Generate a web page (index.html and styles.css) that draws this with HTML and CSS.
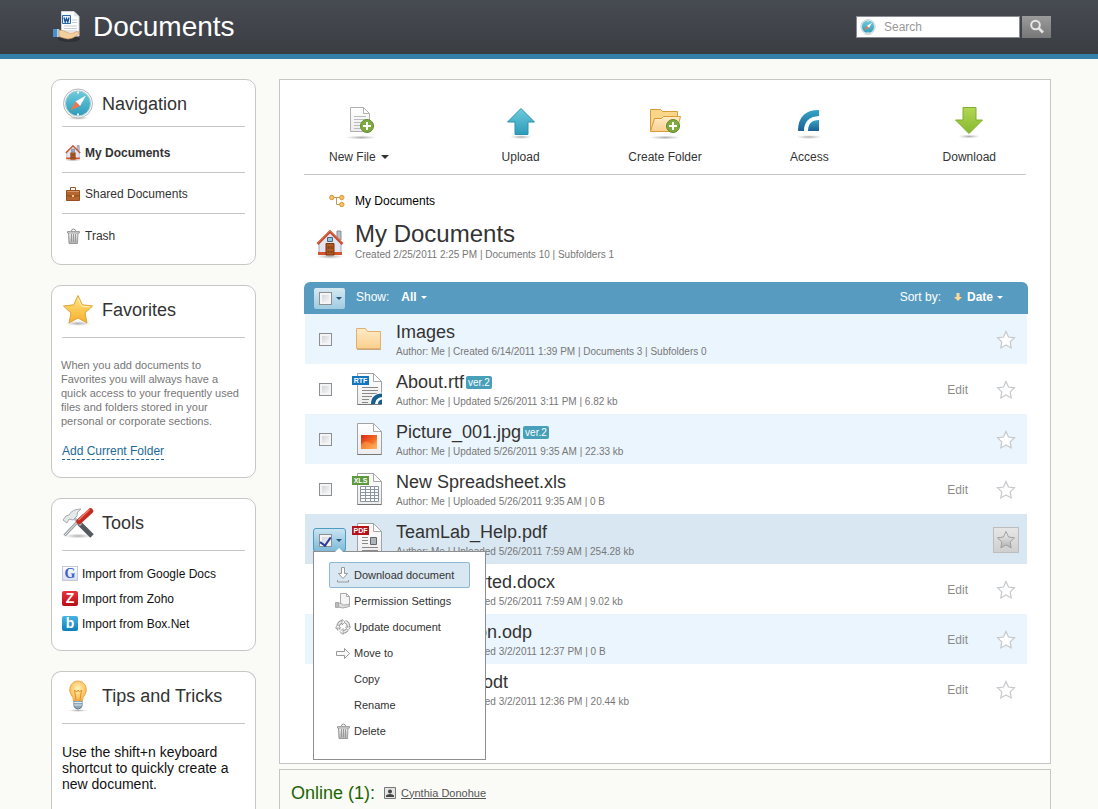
FILE: index.html
```html
<!DOCTYPE html>
<html lang="en">
<head>
<meta charset="utf-8">
<title>Documents</title>
<link rel="stylesheet" href="styles.css">
</head>
<body>
<svg class="defs" width="0" height="0" aria-hidden="true">
  <defs>
    <linearGradient id="gPage" x1="0" y1="0" x2="0" y2="1"><stop offset="0" stop-color="#fff"/><stop offset="1" stop-color="#ececee"/></linearGradient>
    <linearGradient id="gBlue" x1="0" y1="0" x2="0" y2="1"><stop offset="0" stop-color="#6fcbdc"/><stop offset="1" stop-color="#2c9cba"/></linearGradient>
    <linearGradient id="gDeep" x1="0" y1="0" x2="0" y2="1"><stop offset="0" stop-color="#35a5c6"/><stop offset="1" stop-color="#1b5f94"/></linearGradient>
    <linearGradient id="gGreen" x1="0" y1="0" x2="0" y2="1"><stop offset="0" stop-color="#b2d755"/><stop offset="1" stop-color="#86b82c"/></linearGradient>
    <linearGradient id="gFolder" x1="0" y1="0" x2="0" y2="1"><stop offset="0" stop-color="#ffebc8"/><stop offset="1" stop-color="#fbcf8d"/></linearGradient>
    <linearGradient id="gStar" x1="0" y1="0" x2="0" y2="1"><stop offset="0" stop-color="#ffe681"/><stop offset="1" stop-color="#f8ae2c"/></linearGradient>
    <linearGradient id="gPic" x1="0" y1="0" x2="1" y2="1"><stop offset="0" stop-color="#d9261a"/><stop offset=".55" stop-color="#f26a21"/><stop offset="1" stop-color="#ffb45c"/></linearGradient>
    <linearGradient id="gGrey" x1="0" y1="0" x2="0" y2="1"><stop offset="0" stop-color="#f4f4f4"/><stop offset="1" stop-color="#b0b0b0"/></linearGradient>
    <radialGradient id="gBulb" cx=".5" cy=".4" r=".6"><stop offset="0" stop-color="#fff3b8"/><stop offset="1" stop-color="#f9b546"/></radialGradient>
    <radialGradient id="gShade"><stop offset="0" stop-color="#777" stop-opacity=".6"/><stop offset="1" stop-color="#999" stop-opacity="0"/></radialGradient>
    <symbol id="compass" viewBox="0 0 32 32">
      <ellipse cx="16" cy="30" rx="11" ry="2" fill="url(#gShade)"/>
      <circle cx="16" cy="15.500" r="14.500" fill="#f6f6f6" stroke="#b4b8ba"/>
      <circle cx="16" cy="15.500" r="12.500" fill="url(#gBlue)" stroke="#a7ccd6"/>
      <path d="M16 3.500v2M16 25.500v2" stroke="#fff" stroke-width="2"/>
      <path d="M24 7.500 18 18l-4.500-4.500z" fill="#fff"/>
      <path d="m8.500 22.500 5-9L18 18z" fill="#f0774b"/>
    </symbol>
    <symbol id="house" viewBox="0 0 32 32">
      <ellipse cx="16" cy="29.500" rx="14" ry="2.500" fill="url(#gShade)"/>
      <path d="M23 4h4v9h-4z" fill="#b9bdc6" stroke="#8b8f98"/>
      <path d="M5 15 16 5l11 10v12H5z" fill="#e2e4f0" stroke="#a5a7b7"/>
      <path d="M4 25h24v3H4z" fill="#d6532d"/>
      <path d="M12 16.500h8V28h-8z" fill="#b05a23" stroke="#7b3510"/>
      <path d="M13.500 19h2v3h-2zm3 0h2v3h-2zM13.500 24h2v2h-2zm3 0h2v2h-2z" fill="#8a4218"/>
      <path d="M13.500 10.500h5v4h-5z" fill="#8ec4e8" stroke="#59616f"/>
      <path d="M3.500 17 16 4.500 28.500 17" fill="none" stroke="#c2492a" stroke-width="2.500"/>
      <path d="M3.500 16 16 3.800 28.500 16" fill="none" stroke="#ee8a63" stroke-width=".8"/>
    </symbol>
    <symbol id="sheet" viewBox="0 0 32 32">
      <path d="M5.500.500h16l8 8v23h-24z" fill="url(#gPage)" stroke="#a2a2a2"/>
      <path d="M5.500 31.500h24" stroke="#777"/>
      <path d="M21.500.500v8h8z" fill="#fff" stroke="#a8a8a8"/>
    </symbol>
    <symbol id="fav" viewBox="0 0 20 20">
      <path d="M10 1.500 12.500 7l6 .800-4.300 4.100 1 6L10 15l-5.200 2.900 1-6L1.500 7.800l6-.800z" fill="#fff" stroke="#c6c9cc" stroke-width="1.200"/>
    </symbol>
    <symbol id="plus" viewBox="0 0 14 14">
      <circle cx="7" cy="7" r="6.500" fill="#7eaa3f" stroke="#5d8a2a"/>
      <path d="M7 3v8M3 7h8" stroke="#fff" stroke-width="2"/>
    </symbol>
    <symbol id="bin" viewBox="0 0 16 16">
      <path d="M3.500 4.500h9.500l-.5 11h-8.500z" fill="url(#gGrey)" stroke="#999"/>
      <path d="M6.500 6v8M8.500 6v8M10.500 6v8" stroke="#999"/>
      <path d="M2.500 3.500h12v1.500h-12z" fill="#e4e4e4" stroke="#8d8d8d" stroke-width=".8"/>
      <path d="M6.500 3q0-2 2-2t2 2" fill="none" stroke="#8d8d8d"/>
    </symbol>
  </defs>
</svg>

<header class="topbar">
  <div class="brand">
    <svg class="brand-icon" viewBox="0 0 30 32" aria-hidden="true">
      <ellipse cx="17" cy="28" rx="11" ry="3" fill="#222" opacity=".5"/>
      <path d="M9.500.500H22l5 5V25H9.500z" fill="#fff" stroke="#d0d4da"/>
      <path d="M22 .500v5h5z" fill="#dfe4ea"/>
      <path d="M20 9h5M20 11.500h5M12 15h13M12 17.500h13M12 20h13" stroke="#c5cad2"/>
      <path d="M10.500 4.500h8v8h-8z" fill="#e5f0fa" stroke="#2b6bad"/>
      <path d="m12 6.500 1.200 4.500 1.300-3.500 1.300 3.500L17 6.500" fill="none" stroke="#1c4f92" stroke-width="1.300"/>
      <path d="M1 18h6v8H1z" fill="#4b8fc8"/><path d="M5 18h2v8H5z" fill="#a9d0ee"/>
      <path d="M7 19q5 0 8 2.500 3 1 6 .500 5-2.500 6-1 1 1.500-3 4-4 3-8 3-5-1-9-2.500z" fill="#f3cfa0" stroke="#cf9a62" stroke-width=".7"/>
    </svg>
    <h1 class="brand-title">Documents</h1>
  </div>
  <form class="search" role="search">
    <div class="search-field">
      <svg class="icon16" aria-hidden="true"><use href="#compass"/></svg>
      <input class="search-input" type="text" aria-label="Search" placeholder="Search">
    </div>
    <button class="search-button" type="button" aria-label="Find">
      <svg width="16" height="16" viewBox="0 0 16 16" aria-hidden="true"><circle cx="6.500" cy="6" r="4.300" fill="none" stroke="#e6e6e6" stroke-width="2"/><path d="m9.500 9 4.500 4.500" stroke="#e6e6e6" stroke-width="2.500"/></svg>
    </button>
  </form>
</header>

<div class="layout">
  <aside class="sidebar">
    <section class="card">
      <div class="card-head card-head-compact">
        <svg class="icon32" aria-hidden="true"><use href="#compass"/></svg>
        <h2 class="card-title">Navigation</h2>
      </div>
      <nav class="nav">
        <a class="nav-item nav-current" href="#my"><svg class="icon16" viewBox="2 3 28 28" aria-hidden="true"><use href="#house" width="32" height="32"/></svg>My Documents</a>
        <a class="nav-item" href="#shared"><svg class="icon16" viewBox="0 0 16 16" aria-hidden="true"><path d="M5.500 4V1.500h5V4" fill="none" stroke="#9a5a2c"/><path d="M1.500 4.500h13v10h-13z" fill="#b5652f" stroke="#96501f"/><path d="M1.500 9.500q6.500 2 13 0" fill="none" stroke="#8b4a1e"/><path d="M2 5.500h12" stroke="#d99361"/><path d="M7 9h2v2H7z" fill="#f5cf74"/></svg>Shared Documents</a>
        <a class="nav-item" href="#trash"><svg class="icon16" aria-hidden="true"><use href="#bin"/></svg>Trash</a>
      </nav>
    </section>

    <section class="card">
      <div class="card-head">
        <svg class="icon32" viewBox="0 0 32 32" aria-hidden="true"><ellipse cx="16" cy="29.500" rx="13" ry="2.500" fill="url(#gShade)"/><path d="m16 1.500 4.300 9.300 10.200 1.200-7.500 7 2 10-9-5-9 5 2-10-7.500-7 10.200-1.200z" fill="url(#gStar)" stroke="#dfa23a" stroke-linejoin="round"/><path d="m16 4 3.500 8 8.500 1" fill="none" stroke="#fff3b5"/></svg>
        <h2 class="card-title">Favorites</h2>
      </div>
      <div class="fav-body">
        <p class="hint">When you add documents to Favorites you will always have a quick access to your frequently used files and folders stored in your personal or corporate sections.</p>
        <a class="add-link" href="#add">Add Current Folder</a>
      </div>
    </section>

    <section class="card">
      <div class="card-head">
        <svg class="icon32" viewBox="0 0 32 32" aria-hidden="true"><ellipse cx="16" cy="29" rx="14" ry="2.500" fill="url(#gShade)"/><path d="M2.500 28.500 22 8" stroke="#9a9fa3" stroke-width="3"/><path d="M3 28 20 10" stroke="#e8eaec"/><path d="m17 16 13 13" stroke="#555a60" stroke-width="5"/><path d="m11 10 8 8" stroke="#b3b9be" stroke-width="3"/><path d="M1 13 4 9l3-1q3-6 12-6-5 3-4 7l-4 4-4-1-2 4z" fill="#e6e9ea" stroke="#a6abb0"/><path d="M17 14.500 28.500 4" stroke="#c42c21" stroke-width="5.500" stroke-linecap="round"/><path d="m16.500 13 11-10.500" stroke="#f47b68" stroke-width="1.500"/></svg>
        <h2 class="card-title">Tools</h2>
      </div>
      <ul class="tools">
        <li><a class="tool" href="#google"><span class="logo logo-google">G</span>Import from Google Docs</a></li>
        <li><a class="tool" href="#zoho"><span class="logo logo-zoho">Z</span>Import from Zoho</a></li>
        <li><a class="tool" href="#box"><span class="logo logo-box">b</span>Import from Box.Net</a></li>
      </ul>
    </section>

    <section class="card card-last">
      <div class="card-head">
        <svg class="icon32" viewBox="0 0 32 32" aria-hidden="true"><ellipse cx="16" cy="30.500" rx="10" ry="1.500" fill="url(#gShade)"/><path d="M12 20h8v6q-1 3-4 3t-4-3z" fill="#8ea9bb" stroke="#617a8c"/><path d="M12 22.500h8M12 25h8" stroke="#dce8ef"/><path d="M11.500 20.500q0-3-2.500-6-2-3.500-1-7 2-6.500 8-6.500t8 6.500q1 3.500-1 7-2.500 3-2.500 6z" fill="url(#gBulb)" stroke="#eda544"/><path d="M14 20 12.500 10l2 2 1.500-2 1.500 2 2-2L18 20" fill="none" stroke="#e08e2a"/></svg>
        <h2 class="card-title">Tips and Tricks</h2>
      </div>
      <p class="tip">Use the shift+n keyboard shortcut to quickly create a new document.</p>
    </section>
  </aside>

  <main class="main">
    <section class="panel">
      <div class="toolbar">
        <button class="action action-first" type="button">
          <svg class="icon36" viewBox="0 0 36 36" aria-hidden="true"><ellipse cx="17" cy="33.500" rx="16" ry="2" fill="url(#gShade)"/><path d="M6.500 3.500h13l6 6v18h-19z" fill="url(#gPage)" stroke="#b0b0b0"/><path d="M19.500 3.500v6h6z" fill="#fff" stroke="#b0b0b0"/><path d="M10 12.500h12M10 15.500h12M10 18.500h12M10 21.500h9M10 24.500h7" stroke="#bbb"/><use href="#plus" x="16" y="15" width="14" height="14"/></svg>
          <span class="action-label">New File <span class="caret caret-large"></span></span>
        </button>
        <button class="action" type="button">
          <svg class="icon36" viewBox="0 0 36 36" aria-hidden="true"><ellipse cx="18" cy="33" rx="11" ry="2" fill="url(#gShade)"/><path d="M18 4.500 31.500 18H25v12.500H12V18H4.500z" fill="url(#gBlue)" stroke="#2b92ab"/></svg>
          <span class="action-label">Upload</span>
        </button>
        <button class="action" type="button">
          <svg class="icon36" viewBox="0 0 36 36" aria-hidden="true"><ellipse cx="18" cy="33.500" rx="16" ry="2" fill="url(#gShade)"/><path d="M3.500 26.500v-21h10l2 2h15v19z" fill="#f9d68a" stroke="#d79c39"/><path d="m3.500 27.500 4-13h7l2-2h17l-4 15z" fill="url(#gFolder)" stroke="#d79c39"/><use href="#plus" x="19" y="15" width="14" height="14"/></svg>
          <span class="action-label">Create Folder</span>
        </button>
        <button class="action" type="button">
          <svg class="icon36" viewBox="0 0 36 36" aria-hidden="true"><ellipse cx="18" cy="33" rx="13" ry="2" fill="url(#gShade)"/><path d="M7 27Q7 6 28 6v6Q13 13 13 27z" fill="url(#gDeep)"/><path d="M17 27Q17 16 28 16v11z" fill="url(#gDeep)"/></svg>
          <span class="action-label">Access</span>
        </button>
        <button class="action action-last" type="button">
          <svg class="icon36" viewBox="0 0 36 36" aria-hidden="true"><ellipse cx="18" cy="32.500" rx="11" ry="2" fill="url(#gShade)"/><path d="M12 3.500h13V16h6.500L18 29.500 4.500 16H12z" fill="url(#gGreen)" stroke="#7fae2e"/></svg>
          <span class="action-label">Download</span>
        </button>
      </div>

      <div class="crumbs">
        <svg class="icon16" viewBox="0 0 16 16" aria-hidden="true"><path d="M4 4.500h8M7.500 4.500v7H12" fill="none" stroke="#c39b55"/><g fill="#f5bf62" stroke="#d69a3d"><circle cx="2.800" cy="4.500" r="2.200"/><circle cx="12.800" cy="4.500" r="2.200"/><circle cx="12.800" cy="11.500" r="2.200"/></g></svg>
        <a class="crumb" href="#my">My Documents</a>
      </div>

      <div class="folder">
        <svg class="icon32" aria-hidden="true"><use href="#house"/></svg>
        <div>
          <h2 class="folder-title">My Documents</h2>
          <p class="meta">Created 2/25/2011 2:25 PM | Documents 10 | Subfolders 1</p>
        </div>
      </div>

      <div class="listbar">
        <span class="picker"><input class="check" type="checkbox" aria-label="Select all"><button class="picker-button" type="button" aria-label="Selection options"><span class="caret caret-blue"></span></button></span>
        <span class="bar-label">Show:</span>
        <button class="bar-choice" type="button">All <span class="caret"></span></button>
        <span class="bar-label bar-sort">Sort by:</span>
        <button class="bar-choice" type="button"><svg width="10" height="10" viewBox="0 0 10 10" aria-hidden="true"><path d="M3.500 1h3v4H9L5 9 1 5h2.500z" fill="#ffd898"/></svg>Date <span class="caret"></span></button>
      </div>

      <table class="files">
        <tbody>
          <tr class="row row-tint">
            <td class="cell-check"><input class="check" type="checkbox" aria-label="Select Images"></td>
            <td class="cell-icon"><svg class="icon32" viewBox="0 0 32 32" aria-hidden="true"><path d="M4.500 25.500v-20h9l2 3h13v17z" fill="url(#gFolder)" stroke="#e2b06c"/><path d="M5 26.500h24" stroke="#c7a984"/></svg></td>
            <td class="cell-main"><a class="name" href="#f1">Images</a><p class="meta">Author: Me | Created 6/14/2011 1:39 PM | Documents 3 | Subfolders 0</p></td>
            <td class="cell-edit"></td>
            <td class="cell-star"><button class="star" type="button" aria-label="Add to favorites"><svg class="icon20"><use href="#fav"/></svg></button></td>
          </tr>
          <tr class="row">
            <td class="cell-check"><input class="check" type="checkbox" aria-label="Select About.rtf"></td>
            <td class="cell-icon"><span class="doc"><svg class="icon32" viewBox="0 0 32 32" aria-hidden="true"><use href="#sheet"/><path d="M10 14.500h16M10 17.500h16M10 20.500h16M10 23.500h10M10 26.500h7M10 29.500h6" stroke="#888"/><path d="M18 31Q18 20 30 19.500V31z" fill="#fff"/><path d="M19 31q0-10 11-10.500v3.500q-6.500 1-7 7zM26 31q0-4 4-4.500V31z" fill="#15608f"/></svg><span class="tag tag-rtf">RTF</span></span></td>
            <td class="cell-main"><a class="name" href="#f2">About.rtf</a><span class="ver">ver.2</span><p class="meta">Author: Me | Updated 5/26/2011 3:11 PM | 6.82 kb</p></td>
            <td class="cell-edit"><a class="edit" href="#e2">Edit</a></td>
            <td class="cell-star"><button class="star" type="button" aria-label="Add to favorites"><svg class="icon20"><use href="#fav"/></svg></button></td>
          </tr>
          <tr class="row row-tint">
            <td class="cell-check"><input class="check" type="checkbox" aria-label="Select Picture_001.jpg"></td>
            <td class="cell-icon"><svg class="icon32" viewBox="0 0 32 32" aria-hidden="true"><use href="#sheet"/><path d="M9 12h16v14H9z" fill="url(#gPic)"/><path d="M9 22q4-6 9-2t7-4v10H9z" fill="#ffb35e" opacity=".45"/></svg></td>
            <td class="cell-main"><a class="name" href="#f3">Picture_001.jpg</a><span class="ver">ver.2</span><p class="meta">Author: Me | Updated 5/26/2011 9:35 AM | 22.33 kb</p></td>
            <td class="cell-edit"></td>
            <td class="cell-star"><button class="star" type="button" aria-label="Add to favorites"><svg class="icon20"><use href="#fav"/></svg></button></td>
          </tr>
          <tr class="row">
            <td class="cell-check"><input class="check" type="checkbox" aria-label="Select New Spreadsheet.xls"></td>
            <td class="cell-icon"><span class="doc"><svg class="icon32" viewBox="0 0 32 32" aria-hidden="true"><use href="#sheet"/><path d="M8.500 13.500h18v15h-18zM8.500 16.500h18M8.500 19.500h18M8.500 22.500h18M8.500 25.500h18M13.500 13v15M18.500 13v15M22.500 13v15" fill="#fff" stroke="#8a94a2"/></svg><span class="tag tag-xls">XLS</span></span></td>
            <td class="cell-main"><a class="name" href="#f4">New Spreadsheet.xls</a><p class="meta">Author: Me | Uploaded 5/26/2011 9:35 AM | 0 B</p></td>
            <td class="cell-edit"><a class="edit" href="#e4">Edit</a></td>
            <td class="cell-star"><button class="star" type="button" aria-label="Add to favorites"><svg class="icon20"><use href="#fav"/></svg></button></td>
          </tr>
          <tr class="row row-selected">
            <td class="cell-check cell-open">
              <div class="menu-anchor">
                <span class="picker picker-open"><input class="check" type="checkbox" checked aria-label="Select TeamLab_Help.pdf"><button class="picker-button" type="button" aria-label="Document actions"><span class="caret caret-blue"></span></button></span>
                <div class="menu">
                  <button class="menu-item menu-active" type="button"><svg class="icon16" viewBox="0 0 16 16" aria-hidden="true"><path d="M6.500.500h3v6h3L8 11.500l-4.500-5h3z" fill="#fff" stroke="#999"/><path d="M2.500 13v2h11v-2" fill="none" stroke="#999"/></svg>Download document</button>
                  <button class="menu-item" type="button"><svg class="icon16" viewBox="0 0 16 16" aria-hidden="true"><path d="M5.500.500h6l3 3v10h-9z" fill="#f5f5f5" stroke="#aaa"/><path d="M11.500.500v3h3" fill="none" stroke="#aaa"/><path d="M.5 9.500h3v5h-3z" fill="#bbb" stroke="#aaa"/><path d="M3.500 10q3 0 5 2 4 0 6-1 1 1-2 3-5 2-9 0z" fill="#ddd" stroke="#aaa"/></svg>Permission Settings</button>
                  <button class="menu-item" type="button"><svg class="icon16" viewBox="0 0 16 16" aria-hidden="true"><g fill="none" stroke="#999" stroke-width="3.500"><path d="M3 7q1-4 5-4.500M10 2.500q4 2 3.500 6M12 11q-3 3-6 1.500M4 11 2.500 8"/></g><g fill="none" stroke="#eee" stroke-width="1.500"><path d="M3 7q1-4 5-4.500M10 2.500q4 2 3.500 6M12 11q-3 3-6 1.500M4 11 2.500 8"/></g><path d="M7 .5 10 3 7 6zM15.500 8 13 11.500 10.500 8zM8 9.500 5 12.500l3 3zM.5 9 3 5.500 5.500 9z" fill="#fff" stroke="#999" stroke-width=".8"/></svg>Update document</button>
                  <button class="menu-item" type="button"><svg class="icon16" viewBox="0 0 16 16" aria-hidden="true"><path d="M1.500 6.500h8v-3L14.500 8.500l-5 5v-3h-8z" fill="#fafafa" stroke="#999"/></svg>Move to</button>
                  <button class="menu-item" type="button"><span class="icon16"></span>Copy</button>
                  <button class="menu-item" type="button"><span class="icon16"></span>Rename</button>
                  <button class="menu-item" type="button"><svg class="icon16" aria-hidden="true"><use href="#bin"/></svg>Delete</button>
                </div>
              </div>
            </td>
            <td class="cell-icon"><span class="doc"><svg class="icon32" viewBox="0 0 32 32" aria-hidden="true"><use href="#sheet"/><path d="M10 14.500h6M10 17.500h6M10 20.500h6M10 24.500h16M10 27.500h16" stroke="#888"/><path d="M18.500 14.500h6v7h-6z" fill="#aab4bb" stroke="#666"/></svg><span class="tag tag-pdf">PDF</span></span></td>
            <td class="cell-main"><a class="name" href="#f5">TeamLab_Help.pdf</a><p class="meta">Author: Me | Uploaded 5/26/2011 7:59 AM | 254.28 kb</p></td>
            <td class="cell-edit"></td>
            <td class="cell-star"><button class="star star-hover" type="button" aria-label="Add to favorites"><svg class="icon20" viewBox="0 0 20 20"><path d="M10 1.500 12.500 7l6 .800-4.300 4.100 1 6L10 15l-5.200 2.900 1-6L1.500 7.800l6-.800z" fill="url(#gGrey)" stroke="#a0a0a0"/></svg></button></td>
          </tr>
          <tr class="row">
            <td class="cell-check"><input class="check" type="checkbox" aria-label="Select document"></td>
            <td class="cell-icon"><svg class="icon32" aria-hidden="true"><use href="#sheet"/></svg></td>
            <td class="cell-main"><a class="name" href="#f6">Not Supported.docx</a><p class="meta">Author: Me | Uploaded 5/26/2011 7:59 AM | 9.02 kb</p></td>
            <td class="cell-edit"><a class="edit" href="#e6">Edit</a></td>
            <td class="cell-star"><button class="star" type="button" aria-label="Add to favorites"><svg class="icon20"><use href="#fav"/></svg></button></td>
          </tr>
          <tr class="row row-tint">
            <td class="cell-check"><input class="check" type="checkbox" aria-label="Select presentation"></td>
            <td class="cell-icon"><svg class="icon32" aria-hidden="true"><use href="#sheet"/></svg></td>
            <td class="cell-main"><a class="name" href="#f7">Presentation.odp</a><p class="meta">Author: Me | Uploaded 3/2/2011 12:37 PM | 0 B</p></td>
            <td class="cell-edit"><a class="edit" href="#e7">Edit</a></td>
            <td class="cell-star"><button class="star" type="button" aria-label="Add to favorites"><svg class="icon20"><use href="#fav"/></svg></button></td>
          </tr>
          <tr class="row">
            <td class="cell-check"><input class="check" type="checkbox" aria-label="Select text document"></td>
            <td class="cell-icon"><svg class="icon32" aria-hidden="true"><use href="#sheet"/></svg></td>
            <td class="cell-main"><a class="name" href="#f8">Document.odt</a><p class="meta">Author: Me | Uploaded 3/2/2011 12:36 PM | 20.44 kb</p></td>
            <td class="cell-edit"><a class="edit" href="#e8">Edit</a></td>
            <td class="cell-star"><button class="star" type="button" aria-label="Add to favorites"><svg class="icon20"><use href="#fav"/></svg></button></td>
          </tr>
        </tbody>
      </table>
    </section>

    <section class="online">
      <h2 class="online-title">Online (1):</h2>
      <svg width="12" height="12" viewBox="0 0 12 12" aria-hidden="true"><path d="M.5.500h11v11H.5z" fill="#e4e4e4" stroke="#777"/><circle cx="6" cy="4.500" r="2" fill="#444"/><path d="M2 10V8.500Q3 7 6 7t4 1.500V10z" fill="#444"/></svg>
      <a class="online-user" href="#user">Cynthia Donohue</a>
    </section>
  </main>
</div>
</body>
</html>
```

FILE: styles.css
```css
* { box-sizing: border-box; }

body {
  margin: 0;
  min-height: 100vh;
  display: flex;
  flex-direction: column;
  background: #fafaf6;
  color: #333;
  font: 12px/16px "Liberation Sans", Arial, sans-serif;
}

h1, h2, p, ul { margin: 0; padding: 0; font-weight: normal; }
ul { list-style: none; }
a { color: inherit; text-decoration: none; }
svg { display: block; flex: none; }
button { font: inherit; color: inherit; background: none; border: 0; padding: 0; margin: 0; }

.defs { position: absolute; }
.icon16 { width: 16px; height: 16px; flex: none; }
.icon20 { width: 20px; height: 20px; }
.icon32 { width: 32px; height: 32px; }
.icon36 { width: 36px; height: 36px; }

/* Top bar */
.topbar {
  display: flex;
  align-items: center;
  justify-content: space-between;
  height: 59px;
  padding: 0 47px 0 52px;
  background: linear-gradient(#474b52, #3a3d42);
  border-bottom: 5px solid #3580a9;
}
.brand { display: flex; align-items: center; gap: 11px; }
.brand-icon { width: 30px; height: 32px; }
.brand-title { color: #fff; font-size: 28px; line-height: 32px; }
.search { display: flex; gap: 2px; }
.search-field {
  display: flex;
  align-items: center;
  gap: 8px;
  width: 164px;
  height: 22px;
  padding: 0 3px;
  background: #fff;
  border: 1px solid #8a8d91;
}
.search-input {
  flex: 1;
  min-width: 0;
  padding: 0;
  border: 0;
  outline: 0;
  background: none;
  font: inherit;
}
.search-input::placeholder { color: #999; opacity: 1; }
.search-button {
  display: grid;
  place-items: center;
  width: 29px;
  height: 22px;
  background: linear-gradient(#9b9b9b, #777);
}

.layout {
  flex: 1;
  display: grid;
  grid-template-columns: 205px minmax(0, 1fr);
  gap: 23px;
  padding: 20px 47px 0 51px;
}

/* Sidebar */
.sidebar { display: flex; flex-direction: column; gap: 20px; }
.card {
  padding: 0 10px;
  background: #fff;
  border: 1px solid #c6c6c6;
  border-radius: 10px;
}
.card-last { flex: 1; border-bottom: 0; border-radius: 10px 10px 0 0; }
.card-head {
  display: flex;
  align-items: center;
  gap: 8px;
  height: 52px;
  padding-bottom: 4px;
  border-bottom: 1px solid #c6c6c6;
}
.card-head-compact { height: 47px; padding: 2px 0 0; }
.card-title { font-size: 18px; line-height: 20px; }
.nav { padding: 5px 0 9px; }
.nav-item {
  display: flex;
  align-items: center;
  gap: 4px;
  height: 41px;
  padding: 2px 0 0 3px;
  border-bottom: 1px solid #c6c6c6;
}
.nav-item:last-child { border-bottom: 0; }
.nav-current { font-weight: bold; }
.fav-body { padding: 20px 0 17px; }
.hint { margin: 0 0 15px -1px; color: #777; font-size: 11px; line-height: 14px; }
.add-link { display: inline-block; color: #226a96; border-bottom: 1px dashed #226a96; }
.tools { padding: 10px 0 14px; color: #111; }
.tool { display: flex; align-items: center; gap: 4px; height: 25px; }
.logo {
  width: 16px;
  height: 15px;
  font-weight: bold;
  font-size: 14px;
  line-height: 15px;
  text-align: center;
  color: #fff;
  border-radius: 2px;
}
.logo-google { color: #3b5fc4; background: linear-gradient(#fff, #d5deef); border-radius: 0; box-shadow: inset 0 0 0 1px #c3cad6; font-family: "Liberation Serif", serif; }
.logo-zoho { background: linear-gradient(#e8343c, #b90e17); }
.logo-box { background: linear-gradient(#47b5e3, #0d7fb9); }
.tip { padding: 20px 0 16px; color: #111; font-size: 14px; line-height: 16px; }

/* Main panel */
.main { display: flex; flex-direction: column; gap: 5px; }
.panel {
  padding: 20px 22px 49px 24px;
  background: #fff;
  border: 1px solid #c6c6c6;
}
.toolbar {
  display: grid;
  grid-template-columns: repeat(5, 1fr);
  height: 75px;
  margin-right: 2px;
  border-bottom: 1px solid #c6c6c6;
}
.action {
  display: flex;
  flex-direction: column;
  align-items: center;
  justify-self: center;
  align-self: start;
  gap: 9px;
  padding-top: 4px;
}
.action-label { display: flex; align-items: center; gap: 5px; }
.action-first { justify-self: start; margin-left: 25px; }
.action-first .icon36 { margin-left: 6px; }
.action-last { justify-self: end; margin-right: 30px; }
.crumbs { display: flex; align-items: center; gap: 10px; padding: 18px 0 0 25px; color: #000; }
.folder { display: flex; align-items: center; gap: 9px; padding: 12px 0 19px 10px; }
.folder-title { font-size: 24px; line-height: 26px; }
.folder .icon32 { margin-top: 2px; }
.meta { color: #777; font-size: 10px; line-height: 16px; }

.caret {
  display: inline-block;
  border: 3px solid transparent;
  border-top-color: currentColor;
  border-bottom: 0;
}
.caret-large { border-width: 4px; border-bottom: 0; }
.caret-blue { border-top-color: #245a7a; }

/* List header */
.listbar {
  display: flex;
  align-items: center;
  height: 32px;
  padding: 0 25px 2px 10px;
  color: #fff;
  background: #579cc0;
  border-radius: 6px 6px 0 0;
}
.picker {
  display: flex;
  align-items: center;
  gap: 4px;
  width: 31px;
  height: 21px;
  padding-left: 5px;
  background: linear-gradient(#d6e9f3, #9fcbe0);
  border-radius: 2px;
}
.listbar .picker { margin-top: 2px; }
.picker-open {
  width: 33px;
  height: 24px;
  border: 1px solid #4f9cc2;
  border-radius: 3px;
  background: linear-gradient(#c9e4f2, #7dbad8);
}
.picker-button { display: flex; align-items: center; height: 100%; }
.bar-label { margin-left: 11px; }
.bar-choice { display: flex; align-items: center; gap: 4px; margin-left: 12px; font-weight: bold; }
.bar-sort { margin-left: auto; }

.check {
  appearance: none;
  flex: none;
  display: grid;
  justify-items: center;
  width: 13px;
  height: 13px;
  margin: 0;
  border: 1px solid #8c8f94;
  background: linear-gradient(135deg, #c9ccd2, #fff);
  box-shadow: inset 0 0 0 2px #f4f4f4;
}
.check:checked::after {
  content: "";
  width: 5px;
  height: 9px;
  border: solid #2b3f92;
  border-width: 0 2px 2px 0;
  transform: rotate(35deg);
}

/* File rows */
.files { width: calc(100% - 2px); margin: 0 1px; border-collapse: collapse; table-layout: fixed; }
.files td { padding: 0; vertical-align: middle; }
.row { height: 50px; }
.row-tint { background: #ebf5fd; }
.row-selected { background: #d9e7f2; }
.files .cell-check { width: 47px; padding-left: 14px; }
.files .cell-open { padding: 2px 0 0 8px; }
.cell-icon { width: 44px; }
.files .cell-main { padding-top: 2px; }
.files .cell-edit { width: 82px; padding: 2px 24px 0 0; text-align: right; color: #8c8c8c; }
.files .cell-star { width: 35px; padding: 2px 8px 0 0; text-align: right; }
.name { font-size: 18px; line-height: 24px; }
.ver {
  display: inline-block;
  margin-left: 2px;
  padding: 0 2px;
  color: #fff;
  background: #479fb9;
  border-radius: 2px;
  font-size: 10px;
  line-height: 13px;
  vertical-align: 2px;
}
.doc { position: relative; display: block; width: 32px; }
.tag {
  position: absolute;
  top: 3px;
  left: 0;
  width: 17px;
  color: #fff;
  font: bold 7px/9px "Liberation Sans", Arial, sans-serif;
  text-align: center;
}
.tag-rtf { background: #1376bd; }
.tag-xls { background: #5c9a3c; }
.tag-pdf { background: #b5121b; }
.star { display: inline-grid; place-items: center; width: 26px; height: 26px; vertical-align: middle; }
.star-hover { background: linear-gradient(#e6e6e6, #cfcfcf); border: 1px solid #bdbdbd; }

/* Document menu */
.menu-anchor { position: relative; width: 33px; }
.menu {
  position: absolute;
  z-index: 2;
  top: 23px;
  left: 0;
  width: 173px;
  padding: 10px 15px 15px;
  background: #fff;
  border: 1px solid #8e8e8e;
}
.menu::before {
  content: "";
  position: absolute;
  top: -4px;
  left: 20px;
  border: 5px solid transparent;
  border-top: 0;
  border-bottom-color: #fff;
}
.menu-item {
  display: flex;
  align-items: center;
  gap: 3px;
  width: 100%;
  height: 26px;
  padding-left: 5px;
  border: 1px solid transparent;
  border-radius: 2px;
  font-size: 11px;
  white-space: nowrap;
}
.menu-active { background: #d9e7f2; border-color: #8db8cf; }

/* Online bar */
.online {
  flex: 1;
  display: flex;
  align-items: center;
  min-height: 40px;
  padding: 6px 11px 0;
  border: 1px solid #c6c6c6;
  border-bottom: 0;
}
.online-title { margin-right: 9px; color: #1a6600; font-size: 18px; line-height: 20px; }
.online-user { margin-left: 5px; color: #555; font-size: 11px; text-decoration: underline; }
```
